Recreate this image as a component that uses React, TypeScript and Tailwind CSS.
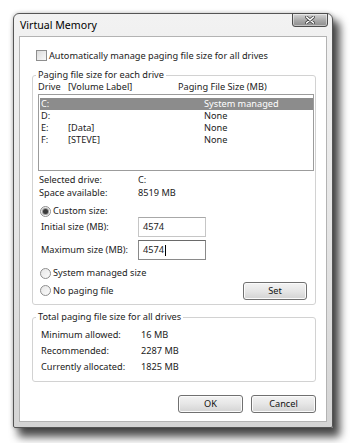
import React from "react";

const font = { fontFamily: '"Noto Sans", "Liberation Sans", sans-serif' };

function Radio({ checked }: { checked?: boolean }) {
  return (
    <span className="flex h-[11px] w-[11px] items-center justify-center rounded-full border border-[#8e8e8e] bg-linear-to-br from-[#e6e6e6] to-[#fbfbfb]">
      {checked && <span className="h-[5px] w-[5px] rounded-full bg-[#3a3a3a] shadow-[0_0_0_1px_#9a9a9a]" />}
    </span>
  );
}

function Button({ label, w }: { label: string; w: string }) {
  return (
    <div
      className={`${w} flex h-[18px] items-center justify-center rounded-[3px] border border-[#707070] bg-linear-to-b from-[#f3f3f3] via-[#e6e6e6] to-[#d3d3d3] text-[#111] shadow-[inset_0_0_0_1px_#fbfbfb]`}
    >
      {label}
    </div>
  );
}

function Field({ value, focused }: { value: string; focused?: boolean }) {
  return (
    <div
      className={`flex h-[20px] w-[68px] items-center border bg-white pl-[4px] ${
        focused ? "border-[#8a8a8a] border-t-[#6a6a6a]" : "border-[#c6c6c6] border-t-[#a8a8a8]"
      }`}
    >
      <span>{value}</span>
      {focused && <span className="ml-px h-[11px] w-px bg-black" />}
    </div>
  );
}

const drives = [
  { d: "C:", label: "", size: "System managed" },
  { d: "D:", label: "", size: "None" },
  { d: "E:", label: "[Data]", size: "None" },
  { d: "F:", label: "[STEVE]", size: "None" },
];

export default function App() {
  return (
    <div className="h-[443px] w-[350px] overflow-hidden bg-white pt-[13px] pl-[13px] text-[9.2px] leading-[12px] text-[#222]" style={font}>
      {/* window frame */}
      <div className="flex h-[415px] w-[320px] flex-col rounded-t-[6px] rounded-b-[2px] border border-[#555] bg-linear-to-b from-[#f2f2f2] via-[#e6e6e6] to-[#d4d4d4] shadow-[0_0_4px_rgba(0,0,0,0.25),6px_8px_9px_1px_rgba(0,0,0,0.7)]">
        {/* title bar */}
        <div className="flex h-[22px] items-start justify-between pl-[6px] pr-[4px]">
          <span className="pt-[5px] text-[10.6px] leading-[13px] text-black">Virtual Memory</span>
          <div className="-mt-px flex h-[14px] w-[36px] items-center justify-center rounded-b-[3px] border border-[#4d4d4d] bg-linear-to-b from-[#d6d6d6] via-[#ababab] to-[#8e8e8e] shadow-[inset_0_0_0_1px_rgba(255,255,255,0.45)]">
            <svg width="10" height="8" viewBox="0 0 10 8">
              <path d="M1.5 1 L8.5 7 M8.5 1 L1.5 7" stroke="#444" strokeWidth="3" strokeLinecap="round" />
              <path d="M1.5 1 L8.5 7 M8.5 1 L1.5 7" stroke="#fff" strokeWidth="1.6" strokeLinecap="round" />
            </svg>
          </div>
        </div>

        {/* content panel */}
        <div className="mx-[5px] flex h-[386px] flex-col border border-[#b3b3b3] bg-white pt-[13px] pl-[12px] pr-[10px]">
          <div className="ml-[4px] flex h-[11px] items-center gap-[2px]">
            <span className="h-[11px] w-[11px] border border-[#8e8e8e] bg-linear-to-br from-[#dcdcdc] to-[#f8f8f8]" />
            <span>Automatically manage paging file size for all drives</span>
          </div>

          {/* paging file size for each drive */}
          <fieldset className="mt-[8px] rounded-[3px] border border-[#d2d2d2] pb-[4px] pl-[3px]">
            <legend className="px-[2px] leading-[12px]">Paging file size for each drive</legend>
            <div className="ml-[2px] grid h-[12px] grid-cols-[30px_110px_1fr]">
              <span>Drive</span>
              <span>[Volume Label]</span>
              <span>Paging File Size (MB)</span>
            </div>
            <div className="mt-px ml-[2px] mr-px h-[77px] border border-[#9c9c9c] pt-[3px]">
              {drives.map((r, i) => (
                <div
                  key={r.d}
                  className={`ml-px grid h-[12px] grid-cols-[27px_136px_1fr] items-center pl-px ${
                    i === 0 ? "bg-[#8c8c8c] text-white" : ""
                  }`}
                >
                  <span>{r.d}</span>
                  <span>{r.label}</span>
                  <span>{r.size}</span>
                </div>
              ))}
            </div>

            <div className="mt-[2px] ml-[3px] grid grid-cols-[99px_1fr] [&>span]:leading-[13px]">
              <span>Selected drive:</span>
              <span>C:</span>
              <span>Space available:</span>
              <span>8519 MB</span>
            </div>

            <div className="mt-[6px] ml-[4px] flex h-[12px] items-center gap-[2px]">
              <Radio checked />
              <span>Custom size:</span>
            </div>
            <div className="ml-[5px] flex h-[20px] items-center">
              <span className="w-[97px]">Initial size (MB):</span>
              <Field value="4574" />
            </div>
            <div className="mt-[3px] ml-[5px] flex h-[20px] items-center">
              <span className="w-[97px]">Maximum size (MB):</span>
              <Field value="4574" focused />
            </div>
            <div className="mt-[7px] ml-[4px] flex h-[12px] items-center gap-[2px]">
              <Radio />
              <span>System managed size</span>
            </div>
            <div className="mt-[2px] ml-[4px] mr-[8px] flex h-[19px] items-center justify-between">
              <div className="flex items-center gap-[2px]">
                <Radio />
                <span>No paging file</span>
              </div>
              <Button label="Set" w="w-[64px]" />
            </div>
          </fieldset>

          {/* totals */}
          <fieldset className="mt-[6px] rounded-[3px] border border-[#d2d2d2] pt-[4px] pb-[6px] pl-[3px]">
            <legend className="px-[2px] leading-[12px]">Total paging file size for all drives</legend>
            <div className="ml-[5px] grid grid-cols-[100px_1fr] [&>span]:leading-[16px]">
              <span>Minimum allowed:</span>
              <span>16 MB</span>
              <span>Recommended:</span>
              <span>2287 MB</span>
              <span>Currently allocated:</span>
              <span>1825 MB</span>
            </div>
          </fieldset>

          <div className="mt-[13px] flex justify-end gap-[8px]">
            <Button label="OK" w="w-[65px]" />
            <Button label="Cancel" w="w-[65px]" />
          </div>
        </div>
      </div>
    </div>
  );
}
